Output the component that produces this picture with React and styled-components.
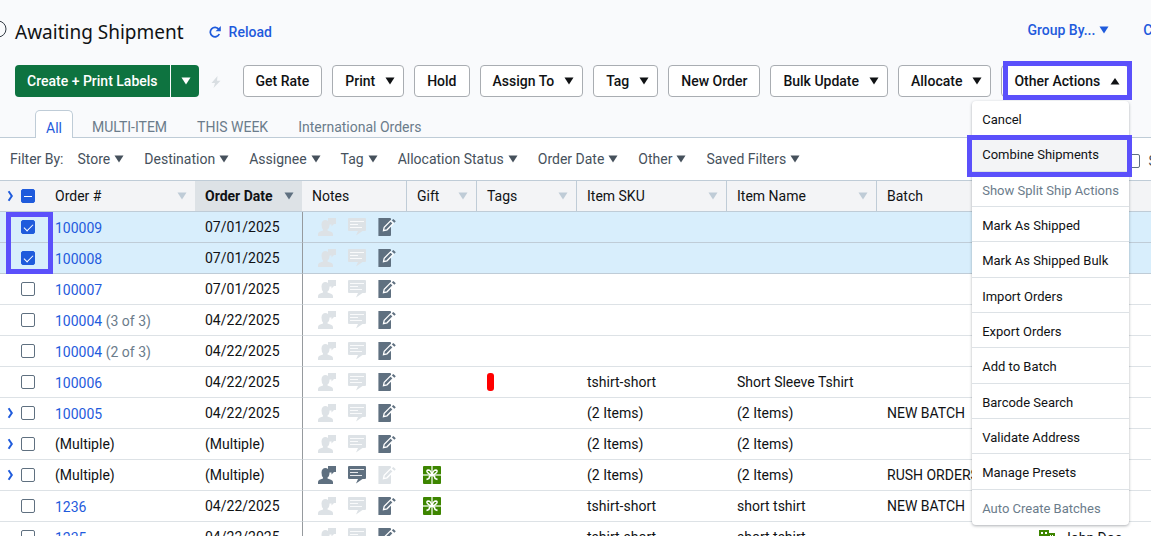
import { useState } from "react";
import styled, { createGlobalStyle, css } from "styled-components";

const filters = [
  "Store",
  "Destination",
  "Assignee",
  "Tag",
  "Allocation Status",
  "Order Date",
  "Other",
  "Saved Filters",
];

const actions = [
  { label: "Get Rate" },
  { label: "Print", menu: true },
  { label: "Hold" },
  { label: "Assign To", menu: true },
  { label: "Tag", menu: true },
  { label: "New Order" },
  { label: "Bulk Update", menu: true },
  { label: "Allocate", menu: true },
];

const otherActions = [
  { label: "Cancel" },
  { label: "Combine Shipments", active: true },
  { label: "Show Split Ship Actions", disabled: true },
  { label: "Mark As Shipped" },
  { label: "Mark As Shipped Bulk" },
  { label: "Import Orders" },
  { label: "Export Orders" },
  { label: "Add to Batch" },
  { label: "Barcode Search" },
  { label: "Validate Address" },
  { label: "Manage Presets" },
  { label: "Auto Create Batches", disabled: true },
];

const orders = [
  { id: "100009", date: "07/01/2025", selected: true },
  { id: "100008", date: "07/01/2025", selected: true },
  { id: "100007", date: "07/01/2025" },
  { id: "100004", part: "(3 of 3)", date: "04/22/2025" },
  { id: "100004", part: "(2 of 3)", date: "04/22/2025" },
  { id: "100006", date: "04/22/2025", tag: true, sku: "tshirt-short", name: "Short Sleeve Tshirt" },
  { id: "100005", date: "04/22/2025", expand: true, sku: "(2 Items)", name: "(2 Items)", batch: "NEW BATCH" },
  { date: "(Multiple)", expand: true, sku: "(2 Items)", name: "(2 Items)" },
  {
    date: "(Multiple)",
    expand: true,
    messages: true,
    gift: true,
    sku: "(2 Items)",
    name: "(2 Items)",
    batch: "RUSH ORDERS",
  },
  { id: "1236", date: "04/22/2025", gift: true, sku: "tshirt-short", name: "short tshirt", batch: "NEW BATCH" },
  { id: "1235", date: "04/22/2025", sku: "tshirt-short", name: "short tshirt", recipient: "John Doe" },
];

const Caret = ({ up }) => (
  <CaretSvg viewBox="0 0 10 8" aria-hidden="true">
    <path d={up ? "M5 1L9.5 7.5H0.5Z" : "M0.5 0.5H9.5L5 7.5Z"} fill="currentColor" />
  </CaretSvg>
);

const Chevron = () => (
  <svg width="8" height="12" viewBox="0 0 8 12" aria-hidden="true">
    <path d="M2.600 1.200L5.800 6L2.600 10.800" fill="none" stroke="currentColor" strokeWidth="2" />
  </svg>
);

const BuyerNote = () => (
  <svg viewBox="0 0 18 18">
    <path
      fill="currentColor"
      d="M10 0H18v6h-2L13.500 8.500V6.500H11.500C11.500 9 11 10.500 9.500 11.500v1l3.500 1.200Q15 14.500 15 16v2H0v-2q0-1.600 1.500-2.300L5 12.500v-1Q3.500 10 3.500 6.500Q3.700 2 7.500 2q1.400 0 2.500 1Z"
    />
  </svg>
);

const Comment = () => (
  <svg viewBox="0 0 18 18">
    <path fill="currentColor" d="M1 0h16q1 0 1 1v11q0 1-1 1h-2.500L8 17.500L10 13H1q-1 0-1-1V1q0-1 1-1Z" />
    <path d="M2 3.500h14M2 6.500h8M2 9.500h12" stroke="#fff" opacity="0.85" />
  </svg>
);

const InternalNote = () => (
  <svg viewBox="0 0 18 18">
    <path fill="currentColor" opacity="0.6" d="M0 0h1v18H0Z" />
    <path fill="currentColor" d="M1 0h11q1 0 1 1v16q0 1-1 1H1Z" />
    <path d="M5.500 12.700L6.200 9.200L12.600 2.800L15.200 5.400L9 11.800Z" fill="currentColor" stroke="#fff" strokeWidth="1.300" />
    <path d="M13.800 2.300L15.400 0.900L17.800 3.300L16.300 4.700Z" fill="currentColor" />
  </svg>
);

const Gift = () => (
  <svg width="18" height="18" viewBox="0 0 18 18" role="img" aria-label="Gift">
    <rect width="18" height="18" rx="1" fill="#3d8500" />
    <path d="M9 0v18M0 9h18" stroke="#dcebcf" strokeWidth="1.5" />
    <path
      d="M9 9Q8 4 5 4Q3 4.500 4.500 6.500Q6 8.500 9 9Q12 8.500 13.500 6.500Q15 4.500 13 4Q10 4 9 9ZM9 9Q6 9.500 6 12.500L3.500 13.500M9 9Q12 9.500 12 12.500L14.500 13.500"
      fill="none"
      stroke="#fff"
      strokeWidth="1.400"
    />
  </svg>
);

const Building = () => (
  <svg width="16" height="16" viewBox="0 0 16 16" aria-hidden="true">
    <path d="M0 0h10v3h6v13H0Z" fill="#3d8500" />
    <path d="M2 2h2v2H2zM6 2h2v2H6zM2 6h2v2H2zM6 6h2v2H6zM11 5h1v2h-1zM13 5h1v2h-1zM2 10h2v2H2zM6 10h2v2H6z" fill="#fff" />
  </svg>
);

const Order = ({ order, first }) => {
  const [checked, setChecked] = useState(Boolean(order.selected));
  const name = order.id || "Multiple";
  return (
    <Row $selected={checked}>
      <SelectCell>
        <Selector>
          <Expand aria-label={`Expand ${name}`} $hidden={!order.expand}>
            <Chevron />
          </Expand>
          <Checkbox
            type="checkbox"
            aria-label={`Select ${name}`}
            checked={checked}
            onChange={(e) => setChecked(e.target.checked)}
          />
        </Selector>
        {first && <SelectionFrame />}
      </SelectCell>
      <Cell $link={Boolean(order.id)}>
        {order.id ? <OrderLink href="#order">{order.id}</OrderLink> : "(Multiple)"}
        {order.part && <Part> {order.part}</Part>}
      </Cell>
      <Cell>{order.date}</Cell>
      <NotesCell>
        <Notes>
          <Note $on={order.messages} aria-label="Buyer note"><BuyerNote /></Note>
          <Note $on={order.messages} aria-label="Message"><Comment /></Note>
          <Note $on={!order.messages} aria-label="Internal note"><InternalNote /></Note>
        </Notes>
      </NotesCell>
      <Cell $wide>{order.gift && <Icon><Gift /></Icon>}</Cell>
      <Cell $wide>{order.tag && <TagMark />}</Cell>
      <Cell $wide>{order.sku}</Cell>
      <Cell $wide>{order.name}</Cell>
      <Cell $wide>{order.batch}</Cell>
      <Cell $wide $link>
        {order.recipient && (
          <Recipient>
            <Building />
            {order.recipient}
          </Recipient>
        )}
      </Cell>
    </Row>
  );
};

const App = () => (
  <Page>
    <GlobalStyle />
    <Header>
      <TitleRow>
        <InfoIcon viewBox="0 0 18 18" aria-hidden="true">
          <circle cx="9" cy="9" r="8" fill="none" stroke="#333b44" />
          <path d="M9 8v5M9 5v1.500" stroke="#555d66" />
        </InfoIcon>
        <Title>Awaiting Shipment</Title>
        <TextButton>
          <svg width="12" height="12" viewBox="0 0 12 12" aria-hidden="true">
            <path d="M10.300 8A4.700 4.700 0 1 1 9.800 3.300" fill="none" stroke="currentColor" strokeWidth="1.700" />
            <path d="M11.800 0V5.200H6.600Z" fill="currentColor" />
          </svg>
          Reload
        </TextButton>
        <ViewOptions>
          <TextButton $menu>
            Group By... <Caret />
          </TextButton>
          <TextButton $menu>
            Columns <Caret />
          </TextButton>
        </ViewOptions>
      </TitleRow>

      <Toolbar>
        <SplitButton>
          <PrimaryButton>Create + Print Labels</PrimaryButton>
          <PrimaryButton $toggle aria-label="More label options">
            <Caret />
          </PrimaryButton>
        </SplitButton>
        <Bolt viewBox="0 0 10 12" aria-hidden="true">
          <path d="M6.500 0L0.500 7H4L2.500 12L9.500 4.800H6Z" fill="currentColor" />
        </Bolt>
        {actions.map(({ label, menu }) => (
          <ActionButton key={label} $menu={menu}>
            {label}
            {menu && <Caret />}
          </ActionButton>
        ))}
        <Dropdown>
          <ActionButton $menu aria-expanded="true">
            Other Actions
            <Caret up />
          </ActionButton>
          <ButtonFrame />
          <Menu>
            {otherActions.map(({ label, active, disabled }) => (
              <MenuItem key={label} $active={active} disabled={disabled}>
                {label}
                {active && <ItemFrame />}
              </MenuItem>
            ))}
          </Menu>
        </Dropdown>
      </Toolbar>

      <Tabs>
        <Tab href="#all" $active>All</Tab>
        <Tab href="#multi">MULTI-ITEM</Tab>
        <Tab href="#week">THIS WEEK</Tab>
        <Tab href="#international">International Orders</Tab>
      </Tabs>
    </Header>

    <FilterBar>
      <span>Filter By:</span>
      <FilterList>
        {filters.map((filter) => (
          <FilterButton key={filter}>
            {filter}
            <Caret />
          </FilterButton>
        ))}
      </FilterList>
      <ShowOption>
        <Checkbox type="checkbox" />
        Show
      </ShowOption>
    </FilterBar>

    <Table>
      <colgroup>
        <Col $width={45} />
        <Col $width={150} />
        <Col $width={107} />
        <Col $width={104} />
        <Col $width={70} />
        <Col $width={100} />
        <Col $width={150} />
        <Col $width={150} />
        <Col $width={150} />
        <Col />
      </colgroup>
      <thead>
        <tr>
          <HeadCell $select>
            <Selector>
              <Expand aria-label="Expand all">
                <Chevron />
              </Expand>
              <Checkbox type="checkbox" aria-label="Select all" $partial defaultChecked />
            </Selector>
          </HeadCell>
          <HeadCell><HeadLabel>Order # <Caret /></HeadLabel></HeadCell>
          <HeadCell $sorted><HeadLabel>Order Date <Caret /></HeadLabel></HeadCell>
          <HeadCell>Notes</HeadCell>
          <HeadCell $divided><HeadLabel>Gift <Caret /></HeadLabel></HeadCell>
          <HeadCell $divided><HeadLabel>Tags <Caret /></HeadLabel></HeadCell>
          <HeadCell $divided><HeadLabel>Item SKU <Caret /></HeadLabel></HeadCell>
          <HeadCell $divided><HeadLabel>Item Name <Caret /></HeadLabel></HeadCell>
          <HeadCell $divided><HeadLabel>Batch <Caret /></HeadLabel></HeadCell>
          <HeadCell $divided />
        </tr>
      </thead>
      <tbody>
        {orders.map((order, index) => (
          <Order key={index} order={order} first={index === 0} />
        ))}
      </tbody>
    </Table>
  </Page>
);

const GlobalStyle = createGlobalStyle`
  * {
    box-sizing: border-box;
  }

  body {
    margin: 0;
    overflow: hidden;
    background: #fff;
    color: #101214;
    font-family: Roboto, "Liberation Sans", sans-serif;
    font-size: 14px;
    line-height: 20px;
  }

  button {
    margin: 0;
    padding: 0;
    border: none;
    background: none;
    color: inherit;
    font: inherit;
    white-space: nowrap;
    cursor: pointer;
  }
`;

const Page = styled.div`
  height: 100vh;
  overflow: hidden;
`;

const CaretSvg = styled.svg`
  flex: none;
  width: 10px;
  height: 8px;
`;

const Header = styled.header`
  background: #f9fafc;
`;

const TitleRow = styled.div`
  display: flex;
  align-items: center;
  height: 65px;
  padding-bottom: 2px;
`;

const InfoIcon = styled.svg`
  flex: none;
  width: 18px;
  height: 18px;
  margin: 0 8px 6px -11px;
`;

const Title = styled.h1`
  margin: 0 25px 0 0;
  font-family: "Noto Sans", sans-serif;
  font-size: 19px;
  font-weight: 400;
  line-height: 28px;
  white-space: nowrap;
`;

const TextButton = styled.button`
  display: flex;
  flex: none;
  align-items: center;
  gap: ${(p) => (p.$menu ? "4px" : "8px")};
  color: #1f5bdc;
  font-weight: 500;
`;

const ViewOptions = styled.div`
  display: flex;
  gap: 34px;
  margin: 0 -62px 4px auto;
`;

const Toolbar = styled.div`
  display: flex;
  gap: 10px;
  height: 32px;
  padding-left: 15px;
`;

const SplitButton = styled.div`
  display: flex;
  flex: none;
  gap: 1px;
`;

const PrimaryButton = styled.button`
  display: flex;
  align-items: center;
  justify-content: center;
  width: ${(p) => (p.$toggle ? "28px" : "auto")};
  padding: ${(p) => (p.$toggle ? "0 0 0 2px" : "0 12px")};
  border-radius: ${(p) => (p.$toggle ? "0 4px 4px 0" : "4px 0 0 4px")};
  background: #0e7340;
  color: #fff;
  font-weight: 500;
`;

const Bolt = styled.svg`
  flex: none;
  align-self: center;
  width: 10px;
  height: 12px;
  margin: 2px 12px 0 2px;
  color: #d9dee2;
`;

const ActionButton = styled.button`
  display: flex;
  flex: none;
  align-items: center;
  gap: 10px;
  height: 32px;
  padding: ${(p) => (p.$menu ? "0 8px 0 12px" : "0 12px")};
  border: 1px solid #a9adb2;
  border-radius: 4px;
  background: #fff;
  font-weight: 500;
`;

const Dropdown = styled.div`
  position: relative;
  flex: none;
`;

const frame = css`
  position: absolute;
  z-index: 3;
  border: 5px solid #5b50fb;
  pointer-events: none;
`;

const ButtonFrame = styled.div`
  ${frame}
  inset: -4px -3px -3px 2px;
`;

const ItemFrame = styled.span`
  ${frame}
  inset: -1px -3px -6px -5px;
`;

const SelectionFrame = styled.div`
  ${frame}
  top: 0;
  left: 6px;
  width: 47px;
  height: 62px;
`;

const Menu = styled.div`
  position: absolute;
  z-index: 2;
  top: 36px;
  right: 0;
  display: grid;
  grid-auto-rows: 1fr;
  width: 157px;
  height: 424px;
  border-radius: 4px;
  background: #fff;
  box-shadow: 0 1px 3px rgba(20, 30, 40, 0.35);
`;

const MenuItem = styled.button`
  position: relative;
  padding: 4px 10px 0;
  border-bottom: 1px solid #dde2e6;
  background: ${(p) => (p.$active ? "#f3f4f6" : "none")};
  color: ${(p) => (p.disabled ? "#6b7c8b" : "inherit")};
  font-size: 13px;
  text-align: left;

  &:last-child {
    border-bottom: none;
  }
`;

const Tabs = styled.nav`
  display: flex;
  align-items: flex-end;
  gap: 8px;
  height: 41px;
  padding-left: 35px;
  border-bottom: 1px solid #bfccd7;
`;

const Tab = styled.a`
  height: 27px;
  padding: 6px 10px 0;
  border: 1px solid transparent;
  border-bottom: none;
  border-radius: 5px 5px 0 0;
  color: #6b7c8b;
  text-decoration: none;
  white-space: nowrap;

  ${(p) =>
    p.$active &&
    css`
      height: 28px;
      padding-top: 7px;
      margin-bottom: -1px;
      border-color: #bfccd7;
      background: #fff;
      color: #1f5bdc;
    `}
`;

const FilterBar = styled.div`
  display: flex;
  align-items: center;
  height: 42px;
  padding-left: 10px;
  color: #46515c;
  white-space: nowrap;
`;

const FilterList = styled.div`
  display: flex;
  gap: 20px;
  margin-left: 14px;
`;

const FilterButton = styled.button`
  display: flex;
  align-items: center;
  gap: 4px;
`;

const ShowOption = styled.label`
  display: flex;
  align-items: center;
  gap: 8px;
  margin: 3px -32px 0 auto;
`;

const Table = styled.table`
  width: 100%;
  table-layout: fixed;
  border-spacing: 0;
`;

const Col = styled.col`
  width: ${(p) => (p.$width ? `${p.$width}px` : "auto")};
`;

const HeadCell = styled.th`
  height: 32px;
  padding: ${(p) => (p.$select ? "0" : "0 8px 0 10px")};
  border: 0 solid #bfccd7;
  border-width: 1px 0;
  border-left-width: ${(p) => (p.$divided ? "1px" : "0")};
  background: ${(p) => (p.$sorted ? "#dde2e6" : "#f3f4f6")};
  font-weight: ${(p) => (p.$sorted ? "700" : "400")};
  text-align: left;
  white-space: nowrap;

  ${CaretSvg} {
    color: ${(p) => (p.$sorted ? "#5f7080" : "#bfccd7")};
  }
`;

const HeadLabel = styled.div`
  display: flex;
  align-items: center;
  justify-content: space-between;
`;

const Row = styled.tr`
  background: ${(p) => (p.$selected ? "#d8eefc" : "#fff")};

  td {
    border-bottom: 1px solid ${(p) => (p.$selected ? "#bfccd7" : "#dde2e6")};
  }
`;

const Cell = styled.td`
  height: 31px;
  padding: ${(p) => (p.$link ? "2px" : "0")} 0 0 ${(p) => (p.$wide ? "11px" : "10px")};
  overflow: hidden;
  white-space: nowrap;
`;

const SelectCell = styled.td`
  position: relative;
  padding: 0;
`;

const NotesCell = styled.td`
  padding: 0 0 0 15px;
  border-left: 1px solid #969a9e;
`;

const Selector = styled.div`
  display: flex;
  align-items: center;
  gap: 6px;
  padding-left: 6px;
`;

const Expand = styled.button`
  display: flex;
  flex: none;
  width: 9px;
  color: #1f5bdc;
  visibility: ${(p) => (p.$hidden ? "hidden" : "visible")};
`;

const Checkbox = styled.input`
  appearance: none;
  position: relative;
  flex: none;
  width: 14px;
  height: 14px;
  margin: 0;
  border: 1px solid #5f7080;
  border-radius: 2px;
  background: #fff;

  &:checked {
    border-color: #1f5bdc;
    background: #1f5bdc;
  }

  &:checked::after {
    content: "";
    position: absolute;
    ${(p) =>
      p.$partial
        ? css`
            top: 6px;
            left: 2px;
            width: 8px;
            height: 1px;
            background: #fff;
          `
        : css`
            top: 1px;
            left: 4px;
            width: 4px;
            height: 8px;
            border: solid #fff;
            border-width: 0 1px 1px 0;
            transform: rotate(45deg);
          `}
  }
`;

const OrderLink = styled.a`
  color: #1f5bdc;
  text-decoration: none;
`;

const Part = styled.span`
  color: #6b7c8b;
`;

const Notes = styled.div`
  display: flex;
  gap: 12px;
`;

const Note = styled.button`
  display: flex;
  width: 18px;
  height: 18px;
  color: ${(p) => (p.$on ? "#5f7080" : "#dde2e6")};
`;

const Icon = styled.div`
  display: flex;
  padding-left: 6px;
`;

const TagMark = styled.div`
  width: 7px;
  height: 18px;
  border-radius: 3px;
  background: #f00;
`;

const Recipient = styled.div`
  display: flex;
  align-items: center;
  gap: 8px;
  padding-left: 2px;
`;

export default App;
